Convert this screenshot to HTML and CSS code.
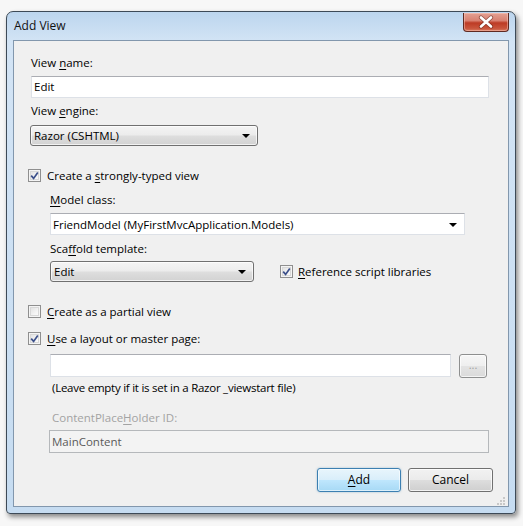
FILE: index.html
```html
<!DOCTYPE html>
<html>
<head>
<meta charset="utf-8">
<title>Add View</title>
<link rel="stylesheet" href="styles.css">
</head>
<body>
<div class="window">
  <div class="titlebar">
    <span class="title">Add View</span>
    <div class="close">
      <svg width="20" height="14" viewBox="0 0 20 14">
        <path d="M5 2.5 L15 11.5 M15 2.5 L5 11.5" stroke="#5e241a" stroke-width="4.2" stroke-linecap="round" opacity="0.55"/>
        <path d="M5 2.5 L15 11.5 M15 2.5 L5 11.5" stroke="#ffffff" stroke-width="2.6" stroke-linecap="round"/>
      </svg>
    </div>
  </div>
  <div class="client">
    <div class="label first">View <u>n</u>ame:</div>
    <div class="textbox name-box">Edit</div>
    <div class="label gap5">View <u>e</u>ngine:</div>
    <div class="combo engine-combo"><span>Razor (CSHTML)</span><span class="arrow"></span></div>

    <div class="check-row strongly">
      <span class="checkbox"><svg width="9" height="9" viewBox="0 0 9 9"><path d="M1.2 4.6 L3.6 7.4 L7.8 1.4" fill="none" stroke="#3b4f8a" stroke-width="1.7"/></svg></span>
      <span>Create a <u>s</u>trongly-typed view</span>
    </div>

    <div class="indent">
      <div class="label gap9"><u>M</u>odel class:</div>
      <div class="editcombo model-combo"><span>FriendModel (MyFirstMvcApplication.Models)</span><span class="arrow"></span></div>
      <div class="label gap6">Sca<u>f</u>fold template:</div>
      <div class="scaffold-row">
        <div class="combo scaffold-combo"><span>Edit</span><span class="arrow"></span></div>
        <div class="check-row ref-check">
          <span class="checkbox"><svg width="9" height="9" viewBox="0 0 9 9"><path d="M1.2 4.6 L3.6 7.4 L7.8 1.4" fill="none" stroke="#3b4f8a" stroke-width="1.7"/></svg></span>
          <span><u>R</u>eference script libraries</span>
        </div>
      </div>
    </div>

    <div class="check-row partial">
      <span class="checkbox"></span>
      <span><u>C</u>reate as a partial view</span>
    </div>
    <div class="check-row layout">
      <span class="checkbox"><svg width="9" height="9" viewBox="0 0 9 9"><path d="M1.2 4.6 L3.6 7.4 L7.8 1.4" fill="none" stroke="#3b4f8a" stroke-width="1.7"/></svg></span>
      <span><u>U</u>se a layout or master page:</span>
    </div>

    <div class="indent">
      <div class="layout-row">
        <div class="textbox layout-box"></div>
        <div class="browse">...</div>
      </div>
      <div class="note">(Leave empty if it is set in a Razor _viewstart file)</div>
      <div class="label disabled gap14 note-indent">ContentPlace<u>H</u>older ID:</div>
      <div class="textbox disabled-box">MainContent</div>
    </div>

    <div class="buttons">
      <div class="btn default"><u>A</u>dd</div>
      <div class="btn">Cancel</div>
    </div>
    <div class="grip">
      <svg width="10" height="10" viewBox="0 0 10 10">
        <rect x="7" y="1" width="2" height="2" fill="#c8c8c8"/>
        <rect x="4" y="4" width="2" height="2" fill="#c8c8c8"/>
        <rect x="7" y="4" width="2" height="2" fill="#c8c8c8"/>
        <rect x="1" y="7" width="2" height="2" fill="#c8c8c8"/>
        <rect x="4" y="7" width="2" height="2" fill="#c8c8c8"/>
        <rect x="7" y="7" width="2" height="2" fill="#c8c8c8"/>
      </svg>
    </div>
  </div>
</div>
</body>
</html>
```
FILE: styles.css
```css
html,body{margin:0;padding:0}
body{
  background:#f7f7f7;
  font-family:"Open Sans","Noto Sans","Liberation Sans",sans-serif;
  font-size:11.5px;
  color:#000;
  width:523px;
  height:526px;
  overflow:hidden;
}
u{text-decoration:underline;text-underline-offset:2px}

.window{
  box-sizing:border-box;
  margin:11px 0 0 6px;
  width:510px;
  border:1px solid #3d4a57;
  border-radius:7px 7px 4px 4px;
  padding:0 6px 6px 6px;
  background:linear-gradient(to bottom,#bcd5ee 0px,#d3e4f5 30px,#c6dcf1 100%);
  box-shadow:2px 3px 5px rgba(0,0,0,0.45);
}
.titlebar{
  height:28px;
  display:flex;
  align-items:flex-start;
  position:relative;
}
.title{
  margin-left:1px;
  margin-top:6px;
  line-height:16px;
  font-size:12px;
  color:#111;
}
.close{
  margin-left:auto;
  margin-top:1px;
  width:46px;
  height:19px;
  box-sizing:border-box;
  border:1px solid #5f2a22;
  border-top:none;
  border-radius:0 0 4px 4px;
  background:linear-gradient(to bottom,#e3a193 0%,#d98171 42%,#bd3b25 55%,#c9553c 85%,#d77a5f 100%);
  display:flex;
  align-items:center;
  justify-content:center;
  box-shadow:inset 0 0 0 1px rgba(255,210,200,0.45);
}

.client{
  position:relative;
  box-sizing:border-box;
  border:1px solid #8297ad;
  background:#f0f0f0;
  padding:14px 19px 14px 17px;
  display:flex;
  flex-direction:column;
  align-items:flex-start;
}

.label{line-height:16px;height:16px;white-space:nowrap}
.gap5{margin-top:5px}
.gap6{margin-top:6px}
.gap9{margin-top:9px}
.gap14{margin-top:14px}

.textbox{
  box-sizing:border-box;
  background:#fff;
  border:1px solid #dde1e7;
  border-top-color:#abadb3;
  padding:0 2px;
  line-height:20px;
  white-space:nowrap;
}
.name-box{margin-top:5px;width:458px;height:22px}

.combo{
  box-sizing:border-box;
  display:flex;
  align-items:center;
  justify-content:space-between;
  border:1px solid #707070;
  border-radius:3px;
  padding:0 7px 0 3px;
  background:linear-gradient(to bottom,#f4f4f4 0%,#ececec 48%,#dedede 52%,#d2d2d2 100%);
  box-shadow:inset 0 0 0 1px rgba(255,255,255,0.7);
  white-space:nowrap;
}
.arrow{
  width:0;height:0;
  border-left:4px solid transparent;
  border-right:4px solid transparent;
  border-top:4px solid #000;
  margin-top:1px;
}
.engine-combo{margin-top:6px;margin-left:-1px;width:228px;height:21px}

.check-row{
  display:flex;
  align-items:center;
  gap:6px;
  height:16px;
  white-space:nowrap;
}
.checkbox{
  box-sizing:border-box;
  width:13px;height:13px;
  border:1px solid #8f8f8f;
  background:linear-gradient(135deg,#dcdcdc 0%,#f4f4f4 60%,#ffffff 100%);
  box-shadow:inset 0 0 0 1px #f4f4f4, inset 0 0 0 2px #d8d8d8;
  display:flex;align-items:center;justify-content:center;
  flex:none;
}
.strongly{margin-top:21px;margin-left:-3px}
.partial{margin-top:21px;margin-left:-3px}
.layout{margin-top:11px;margin-left:-3px}

.indent{margin-left:19px;display:flex;flex-direction:column;align-items:flex-start}
.editcombo{
  box-sizing:border-box;
  display:flex;align-items:center;justify-content:space-between;
  background:#fff;
  border:1px solid #dde1e7;
  border-top-color:#abadb3;
  padding:0 7px 0 2px;
  white-space:nowrap;
}
.model-combo{margin-top:5px;width:415px;height:22px}
.scaffold-row{margin-top:4px;display:flex;align-items:center;height:21px}
.scaffold-combo{width:204px;height:21px}
.ref-check{margin-left:26px;gap:5px}

.layout-row{margin-top:8px;display:flex;align-items:flex-start;gap:8px}
.layout-box{width:401px;height:23px}
.browse{
  box-sizing:border-box;
  width:28px;height:24px;
  border:1px solid #8e8f8f;
  border-radius:3px;
  background:linear-gradient(to bottom,#f6f6f6 0%,#efefef 48%,#e3e3e3 52%,#dadada 100%);
  box-shadow:inset 0 0 0 1px rgba(255,255,255,0.7);
  color:#a0a0a0;
  text-align:center;
  line-height:20px;
  font-size:11px;
}
.note{margin-top:2px;margin-left:2px;line-height:16px;white-space:nowrap;letter-spacing:-0.25px}
.note-indent{margin-left:2px}
.disabled{color:#a3a3a3}
.disabled-box{
  margin-top:4px;margin-left:-1px;
  width:440px;height:23px;
  background:#f3f3f3;
  border:1px solid #b5b8bb;
  color:#5a5a5a;
  line-height:21px;
}

.buttons{
  margin-top:15px;
  align-self:stretch;
  display:flex;
  justify-content:flex-end;
  gap:7px;
  margin-right:-4px;
}
.btn{
  box-sizing:border-box;
  width:85px;height:24px;
  border:1px solid #707070;
  border-radius:3px;
  background:linear-gradient(to bottom,#f2f2f2 0%,#ebebeb 48%,#dddddd 52%,#cfcfcf 100%);
  box-shadow:inset 0 0 0 1px rgba(255,255,255,0.75);
  text-align:center;
  line-height:22px;
  font-size:12px;
}
.btn.default{
  width:84px;
  border-color:#3c7fb1;
  background:linear-gradient(to bottom,#e8f5fc 0%,#d9eefa 48%,#bee6fd 52%,#a7d9f5 100%);
  box-shadow:inset 0 0 0 1px rgba(255,255,255,0.6), 0 0 2px rgba(60,127,177,0.5);
}
.grip{
  position:absolute;
  right:2px;bottom:2px;
  width:10px;height:10px;
}
```
